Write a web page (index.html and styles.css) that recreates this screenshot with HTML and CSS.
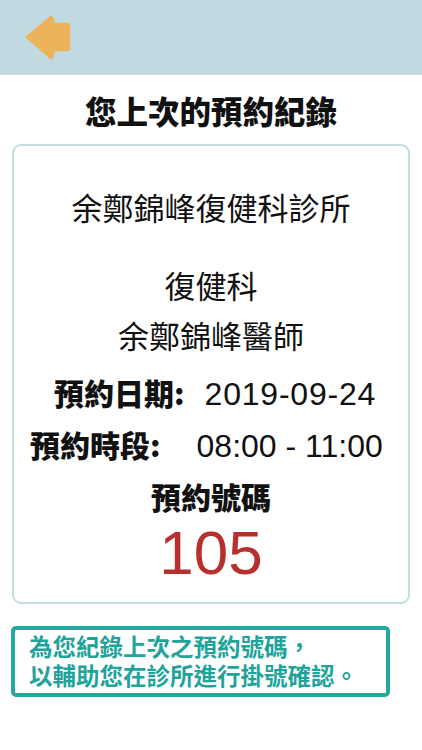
FILE: index.html
```html
<!DOCTYPE html>
<html lang="zh-Hant">
<head>
<meta charset="utf-8">
<title>預約紀錄</title>
<link rel="stylesheet" href="styles.css">
</head>
<body>
<div class="page">
  <header class="topbar">
    <svg class="back" width="48" height="48" viewBox="24 14 48 48" aria-label="返回">
      <path d="M27 37 L51 17 L53 19 V24 H67 Q69 24 69 26 V48 Q69 50 67 50 H53 V56 L51 58 Z" fill="#ecb35a" stroke="#ecb35a" stroke-width="2.5" stroke-linejoin="round"/>
    </svg>
  </header>
  <h1 class="title">您上次的預約紀錄</h1>
  <section class="card">
    <div class="clinic">余鄭錦峰復健科診所</div>
    <div class="dept">復健科</div>
    <div class="doctor">余鄭錦峰醫師</div>
    <div class="row row-date"><b class="label">預約日期:</b><span class="num">2019-09-24</span></div>
    <div class="row row-time"><b class="label">預約時段:</b><span class="num">08:00 - 11:00</span></div>
    <div class="row row-no"><b class="label">預約號碼</b></div>
    <div class="number">105</div>
  </section>
  <div class="notice">為您紀錄上次之預約號碼，<br>以輔助您在診所進行掛號確認。</div>
</div>
</body>
</html>
```

FILE: styles.css
```css
html, body {
  margin: 0;
  padding: 0;
  background: #ffffff;
}
body {
  font-family: "Noto Sans CJK TC", "Noto Sans", sans-serif;
  color: #111111;
}
.page {
  width: 422px;
  display: flex;
  flex-direction: column;
}
.topbar {
  height: 75px;
  background: #c1d9e0;
  display: flex;
  align-items: center;
  padding-left: 24px;
}
.back {
  display: block;
  margin-top: 1px;
}
.title {
  margin: 17px 0 16px 0;
  font-size: 31.5px;
  line-height: 36px;
  font-weight: 900;
  text-align: center;
  color: #111111;
}
.card {
  margin: 0 12px;
  border: 2px solid #c5dde3;
  border-radius: 9px;
  padding: 36px 0 18px 0;
  display: flex;
  flex-direction: column;
  align-items: center;
  text-align: center;
}
.clinic, .dept, .doctor {
  font-size: 31px;
  line-height: 50px;
  font-weight: 400;
}
.dept {
  margin-top: 28px;
}
.row {
  align-self: stretch;
  text-align: left;
  font-size: 30px;
  line-height: 52px;
  white-space: pre;
}
.row-date {
  margin-top: 6px;
  padding-left: 40px;
}
.row-time {
  padding-left: 16px;
}
.row-no {
  text-align: center;
}
.label {
  font-weight: 900;
}
.num {
  font-family: "Liberation Sans", Arial, sans-serif;
  font-size: 32px;
  line-height: 1;
  font-weight: 400;
}
.row-date .num {
  margin-left: 20px;
  letter-spacing: 0.8px;
}
.row-time .num {
  margin-left: 36px;
}
.number {
  font-family: "Liberation Sans", Arial, sans-serif;
  font-size: 62px;
  line-height: 62px;
  color: #b7302d;
}
.notice {
  margin: 22px 0 0 11px;
  width: 357px;
  border: 4px solid #26a79f;
  border-radius: 5px;
  padding: 2px 0 3px 14px;
  font-size: 23.5px;
  line-height: 29px;
  font-weight: 700;
  color: #1fa39b;
}
```
